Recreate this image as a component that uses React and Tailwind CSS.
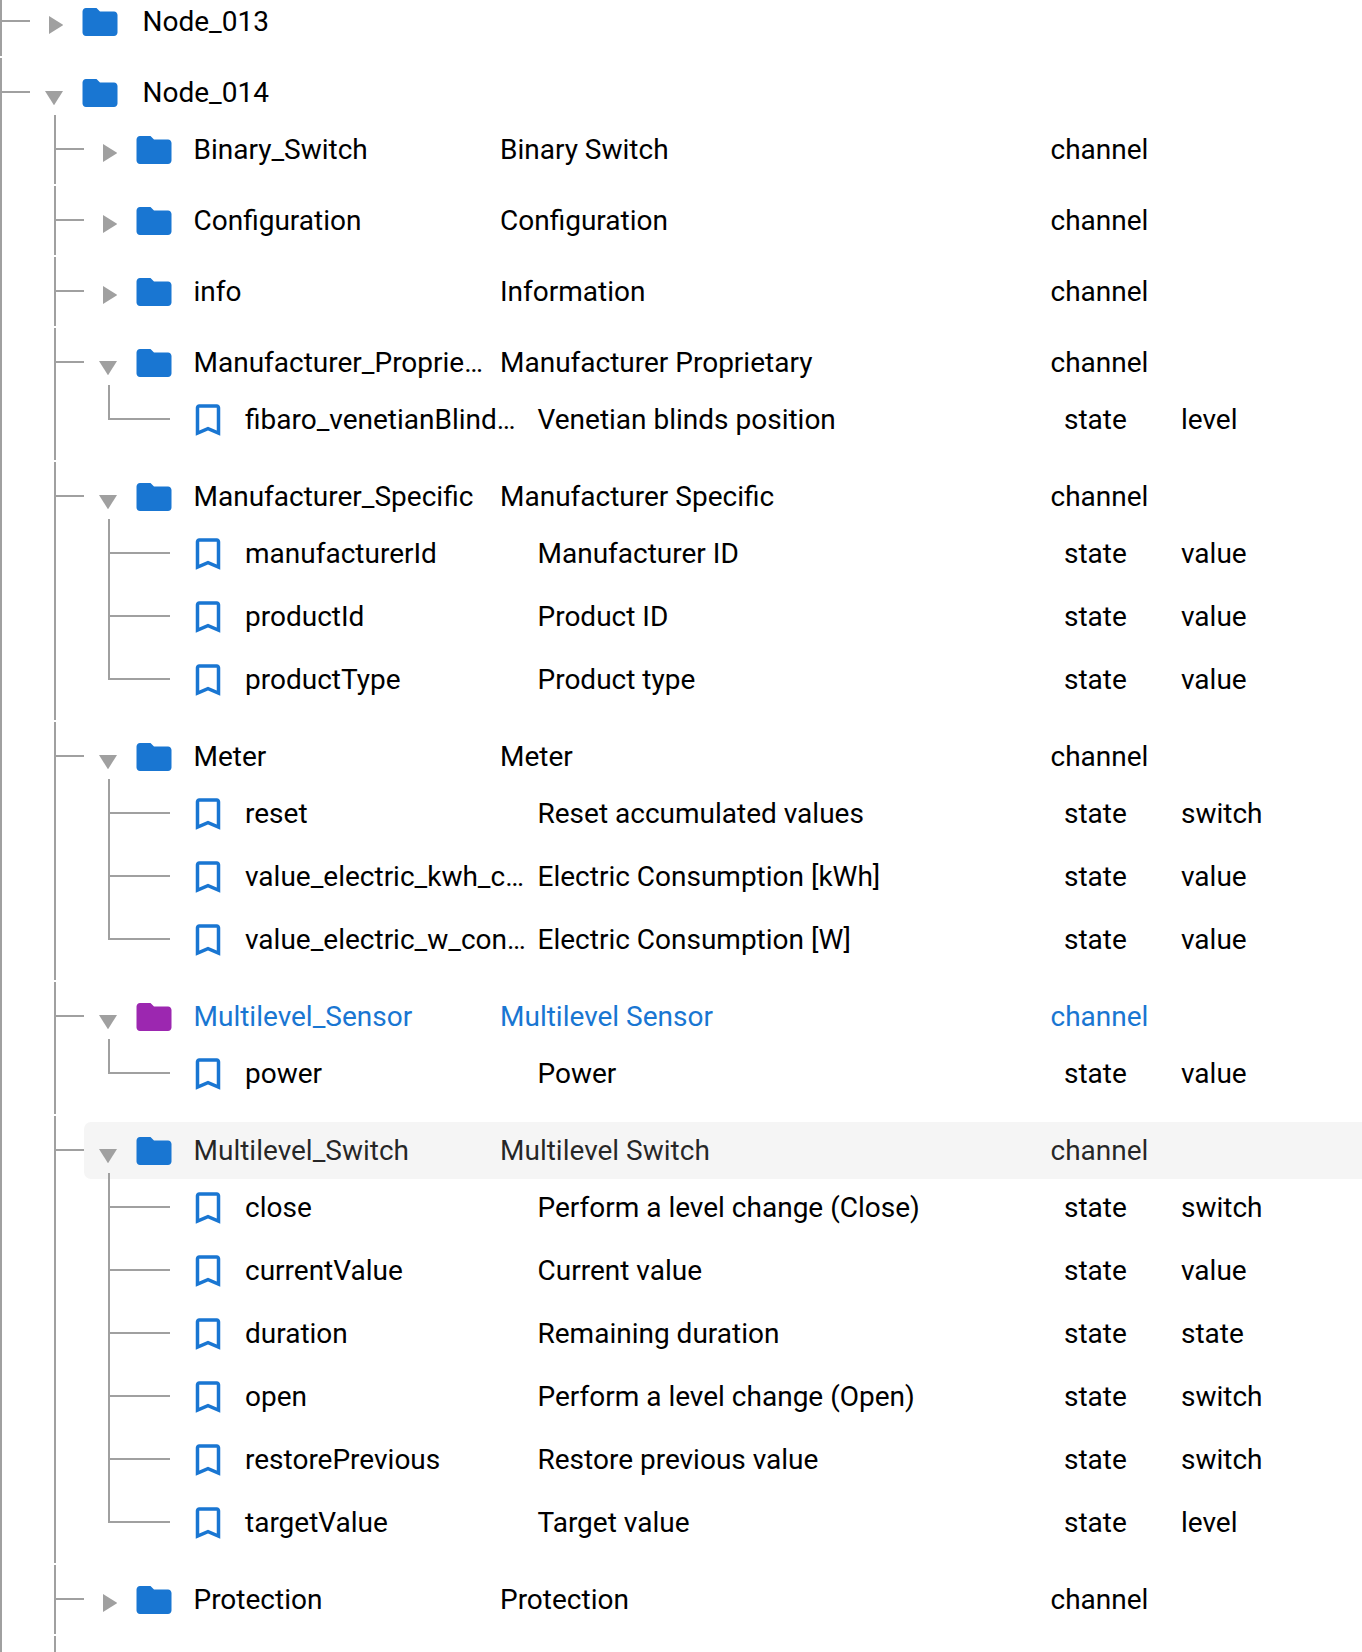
import React from 'react';

const LINE = 'bg-[#a0a0a0]';

const tree = [
  { name: 'Binary_Switch', title: 'Binary Switch' },
  { name: 'Configuration', title: 'Configuration' },
  { name: 'info', title: 'Information' },
  {
    name: 'Manufacturer_Proprie…', title: 'Manufacturer Proprietary', states: [
      ['fibaro_venetianBlind…', 'Venetian blinds position', 'level'],
    ],
  },
  {
    name: 'Manufacturer_Specific', title: 'Manufacturer Specific', states: [
      ['manufacturerId', 'Manufacturer ID', 'value'],
      ['productId', 'Product ID', 'value'],
      ['productType', 'Product type', 'value'],
    ],
  },
  {
    name: 'Meter', title: 'Meter', states: [
      ['reset', 'Reset accumulated values', 'switch'],
      ['value_electric_kwh_c…', 'Electric Consumption [kWh]', 'value'],
      ['value_electric_w_con…', 'Electric Consumption [W]', 'value'],
    ],
  },
  {
    name: 'Multilevel_Sensor', title: 'Multilevel Sensor', active: true, states: [
      ['power', 'Power', 'value'],
    ],
  },
  {
    name: 'Multilevel_Switch', title: 'Multilevel Switch', hovered: true, states: [
      ['close', 'Perform a level change (Close)', 'switch'],
      ['currentValue', 'Current value', 'value'],
      ['duration', 'Remaining duration', 'state'],
      ['open', 'Perform a level change (Open)', 'switch'],
      ['restorePrevious', 'Restore previous value', 'switch'],
      ['targetValue', 'Target value', 'level'],
    ],
  },
  { name: 'Protection', title: 'Protection' },
];

const Arrow = ({ open }) => open ? (
  <svg viewBox="0 0 18 14.3" className="w-[18px] h-[14.3px] ml-[15px] mt-[11.6px] mr-[16px] shrink-0 fill-[#a0a0a0]">
    <path d="M0 0h18L9 14.3z" />
  </svg>
) : (
  <svg viewBox="0 0 14.3 18" className="w-[14.3px] h-[18px] ml-[19px] mt-[8.6px] mr-[15.7px] shrink-0 fill-[#a0a0a0]">
    <path d="M0 0l14.3 9L0 18z" />
  </svg>
);

const Folder = ({ className }) => (
  <svg viewBox="0 0 24 24" className={`w-[42px] h-[42px] mt-[2.6px] shrink-0 ${className}`}>
    <path d="M10 4H4c-1.1 0-1.99.9-1.99 2L2 18c0 1.1.9 2 2 2h16c1.1 0 2-.9 2-2V8c0-1.1-.9-2-2-2h-8l-2-2z" />
  </svg>
);

const Bookmark = () => (
  <svg viewBox="0 0 24 24" className="w-[42px] h-[42px] ml-[16.75px] mt-[2px] shrink-0 fill-[#1976d2]">
    <path d="M17 3H7c-1.1 0-2 .9-2 2v16l7-3 7 3V5c0-1.1-.9-2-2-2zm0 15l-5-2.18L7 18V5h10v13z" />
  </svg>
);

const Leaf = ({ state, last }) => (
  <div className={`flex items-center h-[57px] shrink-0 ${last ? 'mb-[-27.5px]' : 'mb-[6px]'}`}>
    <div className={`w-[60px] h-[2px] shrink-0 ${LINE}`} />
    <Bookmark />
    <div className="w-[292.5px] ml-[16.25px] mt-[2px] whitespace-nowrap shrink-0">{state[0]}</div>
    <div className="w-[526.5px] mt-[2px] whitespace-nowrap shrink-0">{state[1]}</div>
    <div className="w-[117px] mt-[2px] shrink-0">state</div>
    <div className="mt-[2px]">{state[2]}</div>
  </div>
);

const Channel = ({ item }) => {
  const open = !!item.states;
  return (
    <div className="border-l-2 border-[#a0a0a0] py-[6px] mb-[2px]">
      <div className="flex items-center h-[57px]">
        <div className={`w-[28px] h-[2px] shrink-0 ${LINE}`} />
        <div className={`flex-1 flex items-center h-full rounded-l-[7px] ${item.hovered ? 'bg-[#f5f5f5] text-black/85' : ''} ${item.active ? 'text-[#1976d2]' : ''}`}>
          <Arrow open={open} />
          <Folder className={item.active ? 'fill-[#9c27b0]' : 'fill-[#1976d2]'} />
          <div className="w-[306.5px] ml-[18.5px] mt-[2px] whitespace-nowrap shrink-0">{item.name}</div>
          <div className="w-[550.5px] mt-[2px] whitespace-nowrap shrink-0">{item.title}</div>
          <div className="mt-[2px]">channel</div>
        </div>
      </div>
      {open && (
        <div className="flex flex-col ml-[52px] mt-[-6px] pt-[6px] mb-[33.5px] border-l-2 border-[#a0a0a0] relative">
          {item.states.map((s, i) => (
            <Leaf key={s[0]} state={s} last={i === item.states.length - 1} />
          ))}
        </div>
      )}
    </div>
  );
};

const DeviceRow = ({ name, open }) => (
  <div className="flex items-center h-[57px]">
    <div className={`w-[28px] h-[2px] shrink-0 ${LINE}`} />
    <Arrow open={open} />
    <Folder className="fill-[#1976d2]" />
    <div className="ml-[21.5px] mt-[2px]">{name}</div>
  </div>
);

export default function App() {
  return (
    <div className="h-[1652px] w-[1362px] overflow-hidden bg-white text-black text-[28px] font-['Roboto',sans-serif]">
      <div className="mt-[-13.5px]">
        <div className="border-l-2 border-[#a0a0a0] py-[6px] mb-[2px]">
          <DeviceRow name="Node_013" />
        </div>
        <div className="border-l-2 border-[#a0a0a0] pt-[6px]">
          <DeviceRow name="Node_014" open />
          <div className="ml-[52px] mt-[-6px]">
            {tree.map(item => <Channel key={item.name} item={item} />)}
            <div className="border-l-2 border-[#a0a0a0] h-[69px]" />
          </div>
        </div>
      </div>
    </div>
  );
}
